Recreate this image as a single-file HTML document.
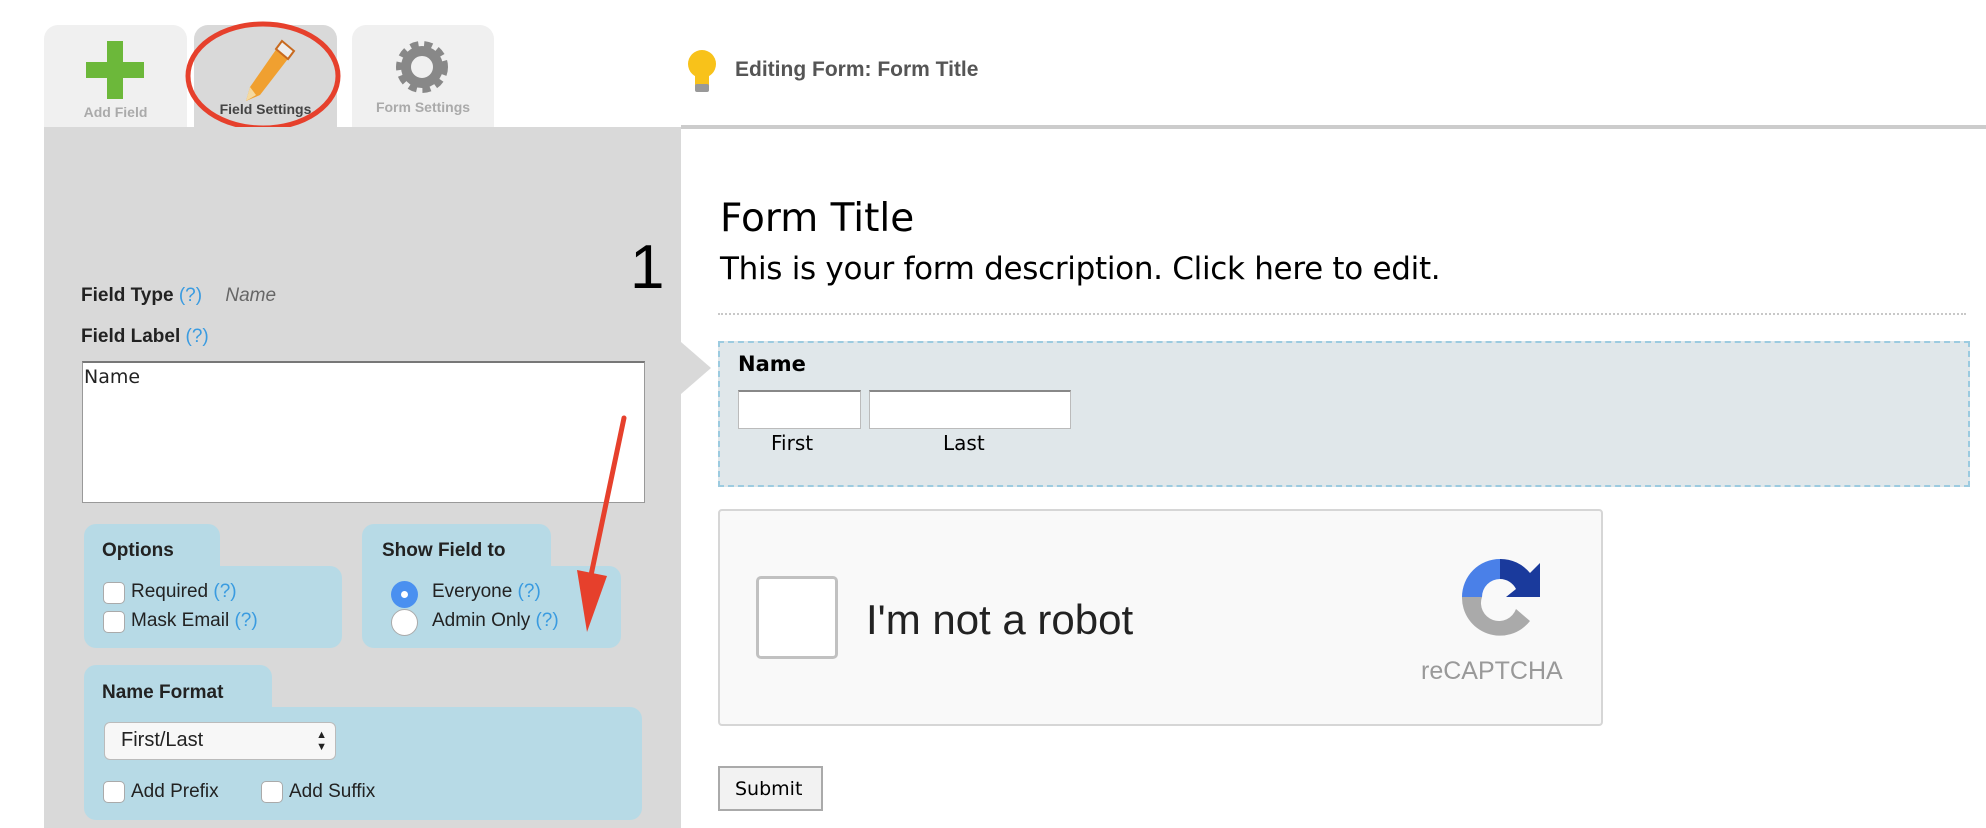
<!DOCTYPE html>
<html><head><meta charset="utf-8"><style>
*{margin:0;padding:0;box-sizing:border-box}
body{width:1986px;height:828px;background:#fff;position:relative;overflow:hidden;font-family:"Liberation Sans",sans-serif}
.a{position:absolute}
.tab{position:absolute;top:25px;height:102px;background:#f0f0f0;border-radius:14px 14px 0 0;text-align:center;font-size:13px;font-weight:bold;color:#aaa}
.lbl{font-size:19px;font-weight:bold;color:#222}
.q{color:#3a9be0;font-weight:normal}
.box{position:absolute;background:#b7dae6;border-radius:12px}
.cb{position:absolute;width:22px;height:22px;background:#fff;border:1px solid #aaa;border-radius:5px}
.t{position:absolute;font-size:19px;color:#222;white-space:nowrap}
.v{font-family:"DejaVu Sans",sans-serif}
</style></head><body>
<div class="tab" style="left:44px;width:143px"><svg class="a" style="left:42px;top:16px" width="58" height="58" viewBox="0 0 58 58"><path d="M21 0h16v21h21v16H37v21H21V37H0V21h21z" fill="#6cb83a"/></svg><div class="a" style="left:0;width:143px;top:79px;font-size:14px">Add Field</div></div>
<div class="tab" style="left:194px;width:143px;background:#d9d9d9;color:#444"><svg class="a" style="left:48px;top:12px" width="56" height="66" viewBox="0 0 56 66"><path d="M40 4l12 10-34 44-14 6 4-14z" fill="#f0a030"/><path d="M40 4l12 10-6 8-12-10z" fill="#eee" stroke="#c86a20" stroke-width="2"/><path d="M8 50l-4 14 10-6z" fill="#f4d9a0"/></svg><div class="a" style="left:0;width:143px;top:76px;font-size:14px">Field Settings</div></div>
<div class="tab" style="left:352px;width:142px"><svg class="a" style="left:42px;top:14px" width="56" height="56" viewBox="0 0 56 56"><circle cx="28" cy="28" r="20" fill="none" stroke="#888" stroke-width="12" stroke-dasharray="7 5"/><circle cx="28" cy="28" r="16" fill="none" stroke="#888" stroke-width="10"/></svg><div class="a" style="left:0;width:142px;top:74px;font-size:14px">Form Settings</div></div>
<svg class="a" style="left:185px;top:21px" width="156" height="110"><ellipse cx="78" cy="55" rx="75" ry="52" fill="none" stroke="#e6402c" stroke-width="5"/></svg>
<svg class="a" style="left:686px;top:48px" width="32" height="46" viewBox="0 0 32 46"><circle cx="16" cy="16" r="14" fill="#f8c21a"/><rect x="9" y="28" width="14" height="12" fill="#f8c21a"/><rect x="9" y="36" width="14" height="8" rx="2" fill="#999"/></svg>
<div class="a" style="left:735px;top:58px;font-size:21px;font-weight:bold;color:#555">Editing Form: Form Title</div>
<div class="a" style="left:681px;top:125px;width:1305px;height:4px;background:#ccc"></div>
<div class="a" style="left:44px;top:127px;width:637px;height:701px;background:#d9d9d9"></div>
<div class="t lbl" style="left:81px;top:285px">Field Type <span class="q">(?)</span> <span style="font-style:italic;font-weight:normal;color:#666;margin-left:18px">Name</span></div>
<div class="t lbl" style="left:81px;top:326px">Field Label <span class="q">(?)</span></div>
<div class="a" style="left:82px;top:361px;width:563px;height:142px;background:#fff;border:1px solid #999;border-top:2px solid #777;padding:3px 1px" ><span class="v" style="font-size:19px;color:#222">Name</span></div>
<div class="box" style="left:84px;top:524px;width:136px;height:80px"></div><div class="box" style="left:84px;top:566px;width:258px;height:82px"></div>
<div class="t lbl" style="left:102px;top:540px">Options</div>
<div class="cb" style="left:103px;top:582px"></div><div class="t" style="left:131px;top:581px">Required <span class="q">(?)</span></div>
<div class="cb" style="left:103px;top:611px"></div><div class="t" style="left:131px;top:610px">Mask Email <span class="q">(?)</span></div>
<div class="box" style="left:362px;top:524px;width:189px;height:80px"></div><div class="box" style="left:362px;top:566px;width:259px;height:82px"></div>
<div class="t lbl" style="left:382px;top:540px">Show Field to</div>
<div class="a" style="left:391px;top:581px;width:27px;height:27px;border-radius:50%;background:#4a90f0"><div class="a" style="left:10px;top:10px;width:7px;height:7px;border-radius:50%;background:#fff"></div></div>
<div class="a" style="left:391px;top:609px;width:27px;height:27px;border-radius:50%;background:#fff;border:1px solid #aaa"></div>
<div class="t" style="left:432px;top:581px">Everyone <span class="q">(?)</span></div>
<div class="t" style="left:432px;top:610px">Admin Only <span class="q">(?)</span></div>
<div class="box" style="left:84px;top:665px;width:188px;height:80px"></div><div class="box" style="left:84px;top:707px;width:558px;height:113px"></div>
<div class="t lbl" style="left:102px;top:682px">Name Format</div>
<div class="a" style="left:104px;top:722px;width:232px;height:38px;background:#f7f7f7;border:1px solid #bbb;border-radius:6px;font-size:20px;color:#222;padding:6px 16px">First/Last<span style="position:absolute;right:8px;top:6px;font-size:11px;line-height:12px">▲<br>▼</span></div>
<div class="cb" style="left:103px;top:781px"></div><div class="t" style="left:131px;top:781px">Add Prefix</div>
<div class="cb" style="left:261px;top:781px"></div><div class="t" style="left:289px;top:781px">Add Suffix</div>
<svg class="a" style="left:560px;top:410px" width="80" height="230"><line x1="64" y1="8" x2="30" y2="170" stroke="#e6402c" stroke-width="5" stroke-linecap="round"/><path d="M17 160l30 6-20 56z" fill="#e6402c"/></svg>
<div class="a" style="left:630px;top:232px;font-size:62px;color:#000">1</div>
<svg class="a" style="left:681px;top:342px" width="32" height="52"><path d="M0 0L30 26 0 52z" fill="#d9d9d9"/></svg>
<div class="a v" style="left:720px;top:196px;font-size:39px;color:#000">Form Title</div>
<div class="a v" style="left:720px;top:251px;font-size:31px;color:#000;letter-spacing:-0.3px">This is your form description. Click here to edit.</div>
<div class="a" style="left:718px;top:313px;width:1248px;border-top:2px dotted #c8c8c8"></div>
<div class="a" style="left:718px;top:341px;width:1252px;height:146px;background:#e0e7ea;border:2px dashed #9ccbe0"></div>
<div class="a v" style="left:738px;top:352px;font-size:21px;font-weight:bold">Name</div>
<div class="a" style="left:738px;top:390px;width:123px;height:39px;background:#fff;border:1px solid #bbb;border-top:2px solid #888"></div>
<div class="a" style="left:869px;top:390px;width:202px;height:39px;background:#fff;border:1px solid #bbb;border-top:2px solid #888"></div>
<div class="a v" style="left:771px;top:431px;font-size:20px">First</div>
<div class="a v" style="left:943px;top:431px;font-size:20px">Last</div>
<div class="a" style="left:718px;top:509px;width:885px;height:217px;background:#f9f9f9;border:2px solid #d6d6d6;border-radius:4px"></div>
<div class="a" style="left:756px;top:576px;width:82px;height:83px;background:#fff;border:3px solid #c1c1c1;border-radius:5px"></div>
<div class="a" style="left:866px;top:596px;font-size:42px;color:#222">I'm not a robot</div>
<svg class="a" style="left:1454px;top:551px" width="92" height="92" viewBox="0 0 92 92"><path d="M46 8a38 38 0 0 0-38 38h20a18 18 0 0 1 18-18z" fill="#4a80e8"/><path d="M46 8v20a18 18 0 0 1 16 10l-10 8h34V12l-10 10A38 38 0 0 0 46 8z" fill="#1a3a9c"/><path d="M8 46a38 38 0 0 0 68 24L62 58a18 18 0 0 1-34-12z" fill="#aaa"/></svg>
<div class="a" style="left:1421px;top:657px;font-size:25px;color:#999">reCAPTCHA</div>
<div class="a v" style="left:718px;top:766px;width:105px;height:45px;background:#f2f2f2;border:2px solid #aaa;font-size:19px;padding:10px 0 0 15px">Submit</div>
</body></html>
